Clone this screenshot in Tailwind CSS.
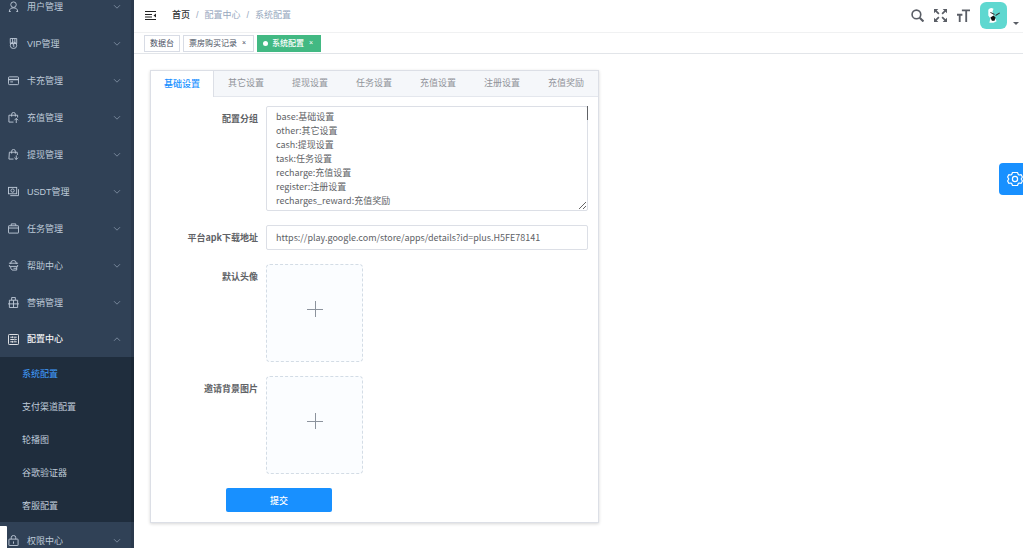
<!DOCTYPE html>
<html lang="zh-CN">
<head>
<meta charset="utf-8">
<meta name="viewport" content="width=device-width, initial-scale=1">
<title>系统配置</title>
<script src="https://cdn.jsdelivr.net/npm/@tailwindcss/browser@4"></script>
</head>
<body class="flex h-screen overflow-hidden bg-white text-[9px] text-[#606266] font-['Liberation_Sans','Noto_Sans_CJK_SC',sans-serif]">
<svg class="hidden">
  <symbol id="down" viewBox="0 0 8 8"><path d="M1 2.200 4 5.200 7 2.200" fill="none" stroke="currentColor"/></symbol>
  <symbol id="plus" viewBox="0 0 16 16"><path d="M8.500 0v16M0 8.500h16" fill="none" stroke="currentColor"/></symbol>
</svg>

<aside class="relative w-[134px] shrink-0 overflow-hidden bg-[#304156] text-[#bfcbd9]">
  <nav class="-mt-3">
    <ul>
      <li><a href="#" class="flex h-[37px] items-center pl-2 pr-[13px]"><svg class="size-[11px] mr-2" viewBox="0 0 12 12" fill="none" stroke="currentColor"><circle cx="6" cy="4" r="3"/><path d="M1.500 11.500c0-3 2-4 4.500-4s4.500 1 4.500 4M1 11.500h2M9 11.500h2"/></svg><span class="flex-1 pt-[2px]">用户管理</span><svg class="size-2 text-[#76869a]"><use href="#down"/></svg></a></li>
      <li><a href="#" class="flex h-[37px] items-center pl-2 pr-[13px]"><svg class="size-[11px] mr-2" viewBox="0 0 12 12" fill="none" stroke="currentColor"><path d="M2.500.5h7V6h-7zM5 .5V6M7.500.5V6"/><circle cx="6" cy="8" r="3.500"/><path d="M5 7.500 6.300 7v3"/></svg><span class="flex-1 pt-[2px]">VIP管理</span><svg class="size-2 text-[#76869a]"><use href="#down"/></svg></a></li>
      <li><a href="#" class="flex h-[37px] items-center pl-2 pr-[13px]"><svg class="size-[11px] mr-2" viewBox="0 0 12 12" fill="none" stroke="currentColor"><rect x=".5" y="2" width="11" height="8.500" rx="1"/><path d="M.5 5h11" stroke-width="1.500"/><path d="M2.500 7.500h3"/></svg><span class="flex-1 pt-[2px]">卡充管理</span><svg class="size-2 text-[#76869a]"><use href="#down"/></svg></a></li>
      <li><a href="#" class="flex h-[37px] items-center pl-2 pr-[13px]"><svg class="size-[11px] mr-2" viewBox="0 0 12 12" fill="none" stroke="currentColor"><path d="M6 11H1V3.500h9.500V6M4 5V2.500a2 2 0 0 1 4 0V5M9 7v5M7 9l2-2 2 2"/></svg><span class="flex-1 pt-[2px]">充值管理</span><svg class="size-2 text-[#76869a]"><use href="#down"/></svg></a></li>
      <li><a href="#" class="flex h-[37px] items-center pl-2 pr-[13px]"><svg class="size-[11px] mr-2" viewBox="0 0 12 12" fill="none" stroke="currentColor"><path d="M6 11H1l.5-7.500H10l.3 3M4 5V2.500a2 2 0 0 1 4 0V5M9 7v4.500M7 9.500l2 2 2-2"/></svg><span class="flex-1 pt-[2px]">提现管理</span><svg class="size-2 text-[#76869a]"><use href="#down"/></svg></a></li>
      <li><a href="#" class="flex h-[37px] items-center pl-2 pr-[13px]"><svg class="size-[11px] mr-2" viewBox="0 0 12 12" fill="none" stroke="currentColor"><rect x=".5" y="1.500" width="9" height="7"/><circle cx="5" cy="5" r="1.800"/><path d="M2.500 10.500h9v-7"/></svg><span class="flex-1 pt-[2px]">USDT管理</span><svg class="size-2 text-[#76869a]"><use href="#down"/></svg></a></li>
      <li><a href="#" class="flex h-[37px] items-center pl-2 pr-[13px]"><svg class="size-[11px] mr-2" viewBox="0 0 12 12" fill="none" stroke="currentColor"><rect x=".5" y="3" width="11" height="8" rx=".5"/><path d="M3.500 3V1h5v2M.5 5.500h11"/></svg><span class="flex-1 pt-[2px]">任务管理</span><svg class="size-2 text-[#76869a]"><use href="#down"/></svg></a></li>
      <li><a href="#" class="flex h-[37px] items-center pl-2 pr-[13px]"><svg class="size-[11px] mr-2" viewBox="0 0 12 12" fill="none" stroke="currentColor"><path d="M3 4.500V3.500a3 3 0 0 1 6 0v1M1 3.500h10M1.500 5.500v1.500h9V5.500M3 7.500v1.500l1.500 2h5V7.500M6 9h3.500"/></svg><span class="flex-1 pt-[2px]">帮助中心</span><svg class="size-2 text-[#76869a]"><use href="#down"/></svg></a></li>
      <li><a href="#" class="flex h-[37px] items-center pl-2 pr-[13px]"><svg class="size-[11px] mr-2" viewBox="0 0 12 12" fill="none" stroke="currentColor"><path d="M1.500 3.500h9v8h-9zM0 7.500h12M6 3.500v8M4 3.500v-3h4v3"/></svg><span class="flex-1 pt-[2px]">营销管理</span><svg class="size-2 text-[#76869a]"><use href="#down"/></svg></a></li>
      <li>
        <a href="#" class="flex h-9 items-center pl-2 pr-[13px] font-medium text-[#f4f4f5]"><svg class="size-[11px] mr-2" viewBox="0 0 12 12" fill="none" stroke="currentColor"><rect x=".5" y=".5" width="11" height="11" rx="1"/><path d="M2.500 3.500h2M6 3.500h3.500M2.500 6h4M8 6h1.500M2.500 8.500h2M6 8.500h3.500M5 2.500v2M7.500 5v2M5 7.500v2"/></svg><span class="flex-1 pt-[2px]">配置中心</span><svg class="size-2 rotate-180 text-[#76869a]"><use href="#down"/></svg></a>
        <ul class="bg-[#1f2d3d]">
          <li><a href="#" class="flex h-[33px] items-center pl-[22px] pt-[2px] text-[#409eff]">系统配置</a></li>
          <li><a href="#" class="flex h-[33px] items-center pl-[22px] pt-[2px]">支付渠道配置</a></li>
          <li><a href="#" class="flex h-[33px] items-center pl-[22px] pt-[2px]">轮播图</a></li>
          <li><a href="#" class="flex h-[33px] items-center pl-[22px] pt-[2px]">谷歌验证器</a></li>
          <li><a href="#" class="flex h-[33px] items-center pl-[22px] pt-[2px]">客服配置</a></li>
        </ul>
      </li>
      <li><a href="#" class="flex h-[37px] items-center pl-2 pr-[13px]"><svg class="size-[11px] mr-2" viewBox="0 0 12 12" fill="none" stroke="currentColor"><rect x="1" y="4.500" width="10" height="7" rx=".5"/><path d="M3.500 4.500V3a2.500 2.500 0 0 1 5 0v1.500M6 7v2.500"/></svg><span class="flex-1 pt-[2px]">权限中心</span><svg class="size-2 text-[#76869a]"><use href="#down"/></svg></a></li>
    </ul>
  </nav>
  <div class="absolute inset-y-0 right-0 w-[3px] bg-black/10"></div>
  <div class="absolute bottom-0 left-0 h-[22px] w-[7px] rounded-tr-[1px] bg-white"></div>
</aside>

<div class="min-w-0 flex-1">
  <header class="flex h-[33px] items-center border-b border-[#f0f1f2] pb-[2px] pl-[11px] pr-1">
    <button type="button" aria-label="折叠菜单" class="mr-4 text-[#222]"><svg class="block size-[11px]" viewBox="0 0 11 11"><path d="M0 1.500h11M0 4.500h7M0 7h7M0 9.500h11" fill="none" stroke="currentColor"/><path d="M11 3.500v4L8.500 5.500z" fill="currentColor"/></svg></button>
    <nav aria-label="面包屑" class="flex flex-1 items-center gap-[6px] pt-[2px] text-[#97a8be]">
      <a href="#" class="font-medium text-[#303133]">首页</a><span>/</span><span>配置中心</span><span>/</span><span>系统配置</span>
    </nav>
    <div class="flex items-center gap-[10px] text-[#5a5e66]">
      <button type="button" aria-label="搜索"><svg class="block size-[13px]" viewBox="0 0 12 12" fill="none" stroke="currentColor" stroke-width="1.500"><circle cx="5" cy="5" r="4"/><path d="m8 8 3.500 3.500" stroke-width="2"/></svg></button>
      <button type="button" aria-label="全屏"><svg class="block size-[13px]" viewBox="0 0 12 12" fill="currentColor" stroke="currentColor"><path d="M1 1l3.500 3.500M11 1 7.500 4.500M1 11l3.500-3.500M11 11 7.500 7.500" stroke-width="1.600"/><path stroke="none" d="M0 0h4L0 4zM12 0v4L8 0zM0 12V8l4 4zM12 12H8l4-4z"/></svg></button>
      <button type="button" aria-label="字号"><svg class="block size-[13px]" viewBox="0 0 12 12" fill="none" stroke="currentColor" stroke-width="1.700"><path d="M4.500 1.300H12M8.500 1.300V12M0 5.300h5M2.500 5.300V12"/></svg></button>
      <button type="button" aria-label="用户菜单" class="flex items-end gap-[6px]"><svg class="block size-[27px]" viewBox="0 0 26 26"><rect width="26" height="26" rx="6" fill="#5fd8d0"/><path d="M8 7.500q2-3 5-1l-1 3 1 3 1 2 2 4-3 1.500H9l1-4-2-3z" fill="#fff"/><path d="m10 10 4 2M15 13l4-2.500" stroke="#333"/><path d="m10 15 3-2 2 2-1 3h-2.500z" fill="#111"/></svg><svg class="mb-[4px] h-[3px] w-[6px]" viewBox="0 0 6 3"><path d="M0 0h6L3 3z" fill="currentColor"/></svg></button>
    </div>
  </header>

  <nav aria-label="标签页" class="flex h-[21px] items-center gap-[3px] border-b border-[#e2e5e9] pl-[10px] text-[8px] text-[#495060]">
    <a href="#" class="flex h-[17px] items-center border border-[#d8dce5] px-[5px] pt-px">数据台</a>
    <a href="#" class="flex h-[17px] items-center gap-[5px] border border-[#d8dce5] pl-[5px] pr-[7px] pt-px">票房购买记录<span class="text-[7px]">×</span></a>
    <a href="#" aria-current="page" class="flex h-[17px] items-center gap-1 bg-[#42b983] pl-[6px] pr-2 pt-px font-medium text-white"><span class="size-[5px] rounded-full bg-white"></span>系统配置<span class="pl-px text-[7px]">×</span></a>
  </nav>

  <main class="p-4">
    <section class="w-[449px] max-w-full border border-[#dcdfe6] bg-white shadow-[0_1px_3px_rgba(0,0,0,0.16)]">
      <div role="tablist" class="flex h-[26px] border-b border-[#e4e7ed] bg-[#f5f7fa] text-[#909399]">
        <button type="button" role="tab" aria-selected="true" class="-mb-px w-[63px] border-r border-[#dcdfe6] bg-white pt-[2px] font-medium text-[#1890ff]">基础设置</button>
        <button type="button" role="tab" class="w-16 pt-px">其它设置</button>
        <button type="button" role="tab" class="w-16 pt-px">提现设置</button>
        <button type="button" role="tab" class="w-16 pt-px">任务设置</button>
        <button type="button" role="tab" class="w-16 pt-px">充值设置</button>
        <button type="button" role="tab" class="w-16 pt-px">注册设置</button>
        <button type="button" role="tab" class="w-16 pt-px">充值奖励</button>
      </div>
      <form class="flex flex-col gap-[14px] px-[10px] pt-[9px] pb-[10px] font-['Noto_Sans_CJK_SC',sans-serif]">
        <div class="flex">
          <label for="group" class="w-[105px] shrink-0 pr-2 text-right font-bold leading-[25px]">配置分组</label>
          <div class="relative flex-1">
            <textarea id="group" rows="7" class="block h-[105px] w-full resize-y overflow-hidden rounded-[2px] border border-[#dcdfe6] px-[9px] py-[3px] leading-[14px] outline-none">base:基础设置
other:其它设置
cash:提现设置
task:任务设置
recharge:充值设置
register:注册设置
recharges_reward:充值奖励</textarea>
            <div class="absolute right-0 top-0 h-[14px] w-px bg-[#606266]"></div>
          </div>
        </div>
        <div class="flex">
          <label for="apk" class="w-[105px] shrink-0 pr-2 text-right font-bold leading-[25px]">平台apk下载地址</label>
          <input id="apk" type="text" value="https://play.google.com/store/apps/details?id=plus.H5FE78141" class="h-[25px] min-w-0 flex-1 rounded-[2px] border border-[#dcdfe6] px-[9px] outline-none">
        </div>
        <div class="flex">
          <span id="avatar" class="w-[105px] shrink-0 pr-2 text-right font-bold leading-[25px]">默认头像</span>
          <button type="button" aria-labelledby="avatar" class="flex h-[98px] w-[97px] items-center justify-center rounded-[4px] border border-dashed border-[#d3dce5] bg-[#fbfdff] pb-2 text-[#8c939d]"><svg class="size-4"><use href="#plus"/></svg></button>
        </div>
        <div class="flex">
          <span id="invite" class="w-[105px] shrink-0 pr-2 text-right font-bold leading-[25px]">邀请背景图片</span>
          <button type="button" aria-labelledby="invite" class="flex h-[98px] w-[97px] items-center justify-center rounded-[4px] border border-dashed border-[#d3dce5] bg-[#fbfdff] pb-2 text-[#8c939d]"><svg class="size-4"><use href="#plus"/></svg></button>
        </div>
        <button type="submit" class="ml-[65px] h-6 w-[106px] rounded-[2px] bg-[#1890ff] pt-px font-medium text-white">提交</button>
      </form>
    </section>
  </main>
</div>

<button type="button" aria-label="设置" class="fixed right-0 top-[163px] flex h-8 w-6 items-center justify-end rounded-l-[4px] bg-[#1890ff] text-white"><svg class="size-4" viewBox="0 0 16 16" fill="none" stroke="currentColor" stroke-width="1.200" stroke-linejoin="round"><path d="M5.500 1.500h5l.8 2 .8.500 2.100-.3L15.400 6 14.200 8l1.200 2-1.200 2.300-2.100-.3-.8.500-.8 2h-5l-.8-2-.8-.5-2.100.3L.6 10 1.800 8 .6 6l1.200-2.300L3.900 4l.8-.5z"/><circle cx="8" cy="8" r="2.600"/></svg></button>
</body>
</html>
